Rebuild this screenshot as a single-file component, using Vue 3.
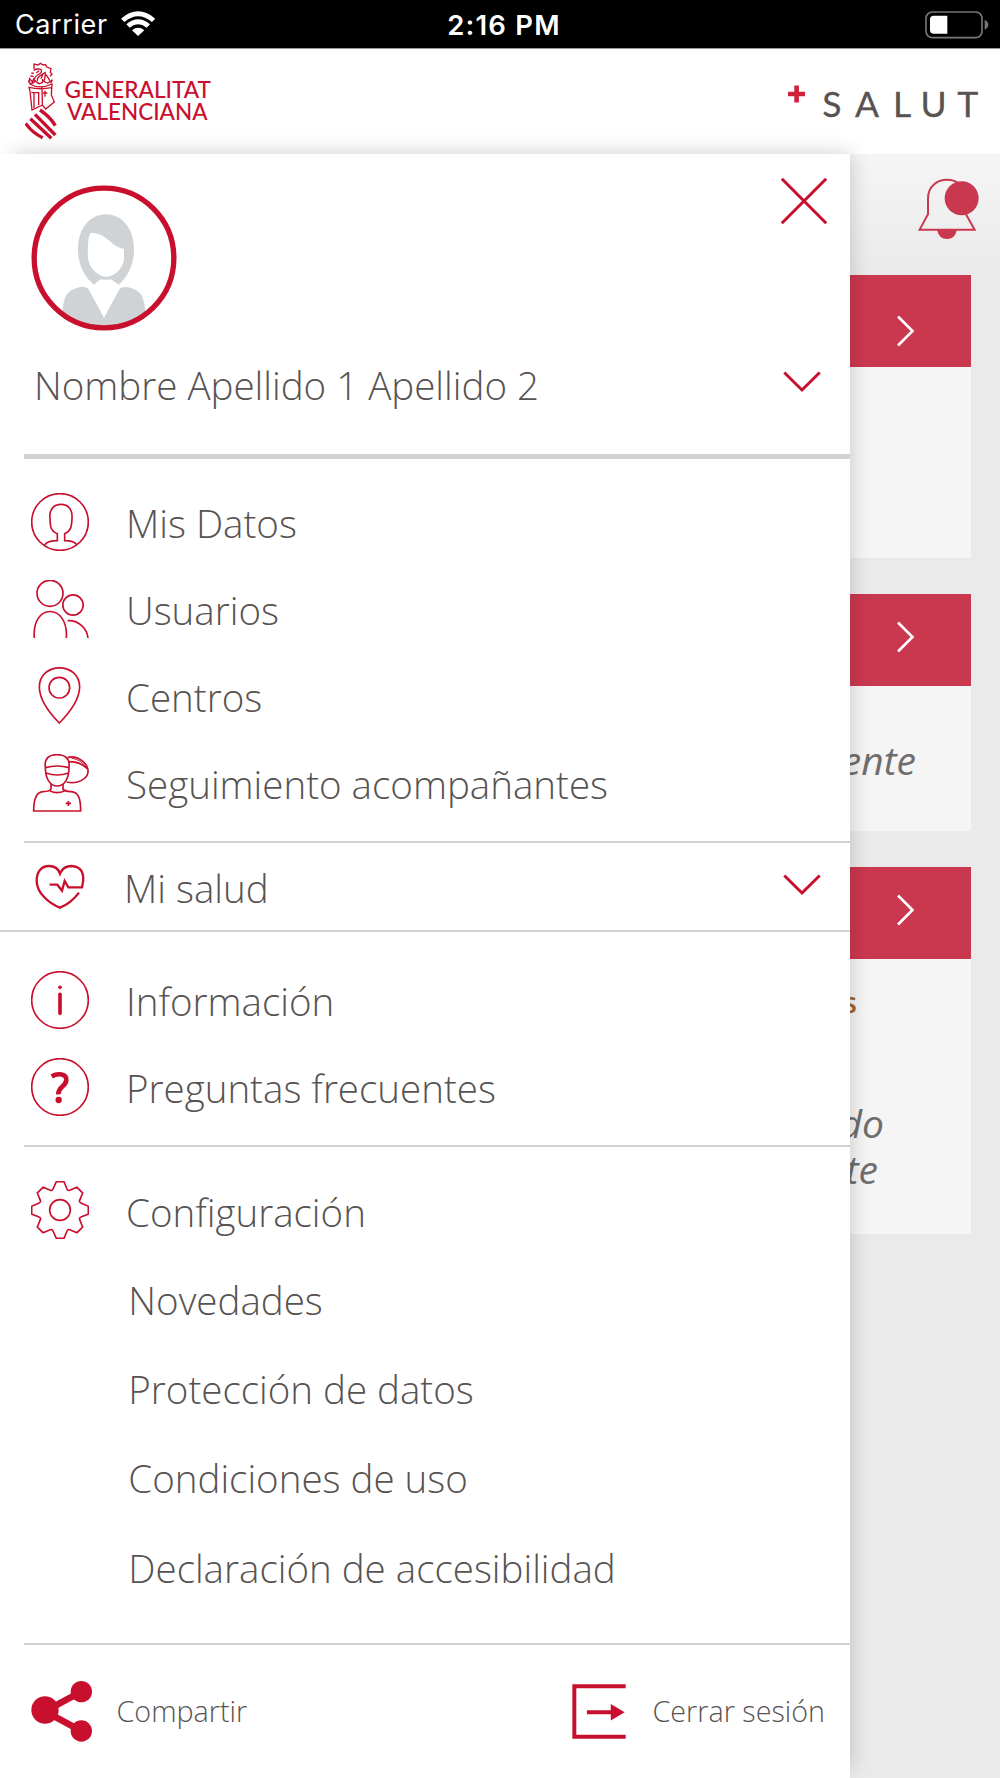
<script setup>
const mainItems = [
  { icon: 'user', label: 'Mis Datos' },
  { icon: 'users', label: 'Usuarios' },
  { icon: 'pin', label: 'Centros' },
  { icon: 'nurse', label: 'Seguimiento acompañantes' },
]
const settings = ['Novedades', 'Protección de datos', 'Condiciones de uso', 'Declaración de accesibilidad']
const cards = [
  { key: 'first', lines: [] },
  { key: 'second', lines: [{ kind: 'note', text: 'ente' }] },
  {
    key: 'third',
    lines: [
      { kind: 'tag', text: 's' },
      { kind: 'note do', text: 'do' },
      { kind: 'note te', text: 'te' },
    ],
  },
]
</script>

<template>
  <div class="screen">
    <div class="status">
      <div class="carrier">
        <span>Carrier</span>
        <svg class="wifi" viewBox="362 35 104 76">
          <path d="M362 58Q413 14 465 58L455 68Q413 34 372 68Z" />
          <path d="M378 75Q413 45 449 75L439 85Q413 65 388 85Z" />
          <path d="M395 93Q413 78 432 93L413 110Z" />
        </svg>
      </div>
      <span class="time">2:16 PM</span>
      <svg class="battery" viewBox="674 31 192 84">
        <rect x="677" y="34" width="168" height="77" rx="19" fill="none" stroke="#777" stroke-width="5" />
        <path d="M700 45H741V99H700Q689 99 689 88V56Q689 45 700 45Z" fill="#fff" />
        <path d="M853 57Q864 63 864 72Q864 81 853 87Z" fill="#777" />
      </svg>
    </div>

    <header class="brand">
      <svg class="gva" width="190" height="80" viewBox="0 0 190 80">
        <g transform="translate(-25 -62) scale(.33333)" fill="none" stroke="#c8102e" stroke-width="4">
          <path d="M102 207V192L114 195L121 190L130 195L137 194L140 201L153 206L151 217L156 223L150 229" />
          <path d="M87 249L89 236L97 246L102 234M87 240Q84 250 94 250Q105 249 103 239Q112 253 121 250Q131 249 127 238Q139 252 145 248L157 239L152 250" />
          <path d="M101 211Q112 205 123 208Q128 216 118 222Q104 229 103 238M94 219L102 220M91 228L101 229M109 219L117 212M112 244Q111 232 122 226L137 216M123 236L130 220M133 242L136 222L146 236L149 242" />
          <path d="M89 252Q119 269 156 252L154 285L163 306L137 327L127 315L96 330L90 274L87 262Q120 270 154 263M94 278H116V315M102 279V324M126 258L127 315" />
          <path d="M135 272V290M129 279H142" />
          <path d="M120 330Q150 350 166 377M105 343L166 405M91 356L154 415M77 370Q96 398 128 413" stroke-width="10" />
        </g>
        <text x="39.5" y="35.700" textLength="146.5" lengthAdjust="spacingAndGlyphs">GENERALITAT</text>
        <text x="42" y="58.200" textLength="140.5" lengthAdjust="spacingAndGlyphs">VALENCIANA</text>
      </svg>
      <svg class="salut" width="212" height="40" viewBox="0 0 212 40">
        <path d="M0 9H17M8.600 0.500V17.500" stroke="#d0213d" stroke-width="4.600" />
        <text x="34.300 67 105 132.500 169.300" y="32">SALUT</text>
      </svg>
    </header>

    <main class="content">
      <div class="bell-row">
        <svg class="bell" viewBox="650 530 190 190">
          <path d="M658 688L683 642V594C683 520 797 520 797 594V642L823 688Z" fill="none" stroke="#ca3850" stroke-width="6" />
          <path d="M710 688H770Q764 716 740 716Q716 716 710 688Z" fill="#ca3850" />
          <circle cx="784" cy="594" r="51" fill="#ca3850" />
        </svg>
      </div>
      <article v-for="card in cards" :key="card.key" class="card" :class="card.key">
        <div class="card-head">
          <svg width="18" height="32" viewBox="0 0 18 32"><path d="M1 1.500L15.500 16L1 30.500" fill="none" stroke="#fff" stroke-width="2.600" /></svg>
        </div>
        <div class="card-body">
          <p v-for="line in card.lines" :key="line.text" :class="line.kind">{{ line.text }}</p>
        </div>
      </article>
    </main>

    <aside class="drawer">
      <div class="panel">
        <section class="profile">
          <div class="profile-top">
            <svg class="avatar" viewBox="93 77 437 437">
              <defs>
                <clipPath id="face"><circle cx="312" cy="296" r="206" /></clipPath>
              </defs>
              <g clip-path="url(#face)">
                <path fill="#d0d3d6" fill-rule="evenodd" d="M282 376C252 352 234 315 234 270C234 207 270 165 318 165C366 165 402 207 402 270C402 315 384 352 356 376Q342 366 333 360Q318 363 303 360Q293 365 282 376ZM272 221C263 226 263 280 264 297C267 326 294 352 318 352C345 352 372 326 372 294V268C336 266 319 218 272 221Z" />
                <path fill="#d0d3d6" d="M188 452C193 400 208 394 232 385Q258 378 266 390L312 475L358 390Q367 379 391 385C417 395 431 400 436 455V520H188Z" />
              </g>
              <circle cx="312" cy="296" r="209.500" fill="none" stroke="#c8102e" stroke-width="16" />
            </svg>
            <svg class="close" width="48" height="48" viewBox="0 0 48 48"><path d="M1.800 1.800L46.200 46.200M46.200 1.800L1.800 46.200" fill="none" stroke="#c8102e" stroke-width="3" /></svg>
          </div>
          <div class="profile-name">
            <span>Nombre Apellido 1 Apellido 2</span>
            <svg class="chevron" width="38" height="22" viewBox="0 0 38 22"><path d="M1.300 1.500L19 19L36.700 1.500" /></svg>
          </div>
        </section>

        <div class="rule thick"></div>

        <nav class="group main">
          <div v-for="item in mainItems" :key="item.label" class="item">
            <svg v-if="item.icon === 'user'" class="icon" viewBox="94 69 174 174">
              <circle cx="181" cy="156" r="85" />
              <path d="M135 225Q142 212 173 212V191C152 183 152 170 151 145C148 116 164 103 184 103C204 103 219 116 217 145C216 170 214 183 195 191V212Q224 212 232 225" />
            </svg>
            <svg v-else-if="item.icon === 'users'" class="icon" viewBox="94 330 174 174">
              <circle cx="151" cy="370" r="39" />
              <circle cx="220" cy="405" r="30.500" />
              <path d="M104 504C95 398 207 398 200 504M204 452C238 450 262 476 265 504" />
            </svg>
            <svg v-else-if="item.icon === 'pin'" class="icon" viewBox="94 591 174 174">
              <path d="M179 759Q120 700 119 652C119 574 240 574 240 652Q238 700 179 759Z" />
              <circle cx="179" cy="653" r="31" />
            </svg>
            <svg v-else class="icon" viewBox="94 852 174 174">
              <path d="M137 892C133 862 152 854 172 854C192 854 212 862 208 892C208 926 195 948 172 948C151 948 137 926 137 892ZM137 893Q172 883 208 893M139 909Q172 921 207 909" />
              <path d="M204 862C235 854 267 882 265 906C264 927 232 944 201 936M208 875Q243 875 263 896" />
              <path d="M215 864Q248 870 262 896" stroke-width="3" />
              <path d="M154 942V957Q151 964 130 965C111 966 102 982 102 1023H243C243 982 235 967 214 965Q194 964 190 957V942M151 963Q172 973 194 963M206 993V1008M198 1000H214" />
            </svg>
            <span>{{ item.label }}</span>
          </div>
        </nav>

        <div class="rule"></div>

        <div class="item health">
          <svg class="icon bold" viewBox="94 113 174 174">
            <path d="M150 193H173L187 211L195 182L206 201H247C258 158 244 138 215 137C195 137 186 148 181 160C177 148 167 137 148 137C125 137 111 154 111 181C111 218 149 250 181 262Q214 249 238 217" />
          </svg>
          <span>Mi salud</span>
          <svg class="chevron" width="38" height="22" viewBox="0 0 38 22"><path d="M1.300 1.500L19 19L36.700 1.500" /></svg>
        </div>

        <div class="rule full"></div>

        <nav class="group info">
          <div class="item">
            <svg class="icon" viewBox="94 453 174 174">
              <circle cx="181" cy="540" r="85" />
              <path d="M181 523V580" stroke-width="11" stroke-linecap="round" />
              <circle cx="181" cy="502" r="5.500" class="solid" />
            </svg>
            <span>Información</span>
          </div>
          <div class="item">
            <svg class="icon" viewBox="94 714 174 174">
              <circle cx="181" cy="801" r="85" />
              <path d="M156 769C176 758 201 762 200 780C199 801 175 799 176 823" stroke-width="14" />
              <circle cx="177" cy="840" r="9.500" class="solid" />
            </svg>
            <span>Preguntas frecuentes</span>
          </div>
        </nav>

        <div class="rule"></div>

        <nav class="group config">
          <div class="item">
            <svg class="icon" viewBox="94 94 174 174">
              <path d="M170 96H193L202 118Q204 124 210 122L232 113L249 130L240 152Q238 158 244 160L266 170V193L244 202Q238 204 240 210L249 232L232 249L210 240Q204 238 202 244L193 266H170L160 244Q158 238 152 240L130 249L113 232L122 210Q124 204 118 202L96 193V170L118 160Q124 158 122 152L113 130L130 113L152 122Q158 124 160 118Z" />
              <circle cx="181" cy="181" r="31" />
            </svg>
            <span>Configuración</span>
          </div>
          <div v-for="label in settings" :key="label" class="item sub">
            <span>{{ label }}</span>
          </div>
        </nav>

        <div class="rule"></div>

        <footer class="actions">
          <div class="action">
            <svg width="61" height="61" viewBox="93 483 183 183">
              <path d="M244 515L135 574L244 633" fill="none" stroke="#c8102e" stroke-width="20" />
              <g fill="#c8102e">
                <circle cx="135" cy="570" r="41" />
                <circle cx="244" cy="515" r="32" />
                <circle cx="244" cy="633" r="32" />
              </g>
            </svg>
            <span>Compartir</span>
          </div>
          <div class="action exit">
            <svg width="54" height="55" viewBox="63 194 163 166">
              <path d="M225 201H70V353H225M108 279H182" fill="none" stroke="#c8102e" stroke-width="12" />
              <path d="M180 254L222 279L180 304Z" fill="#c8102e" />
            </svg>
            <span>Cerrar sesión</span>
          </div>
        </footer>
      </div>
    </aside>
  </div>
</template>

<style>
body {
  background: #eaeaea;
}
</style>

<style scoped>
.screen {
  position: relative;
  width: 1000px;
  height: 1778px;
  overflow: hidden;
  display: flex;
  flex-direction: column;
  font-family: "Open Sans", sans-serif;
  background: #eaeaea;
}
.status {
  box-sizing: border-box;
  height: 49px;
  display: grid;
  grid-template-columns: 1fr auto 1fr;
  align-items: center;
  padding: 2px 11px 0 15px;
  background: #000;
  border-bottom: 1px solid #999;
  color: #fff;
  font-family: Inter, sans-serif;
  font-size: 27px;
  line-height: 46px;
}
.carrier {
  display: flex;
  align-items: center;
  gap: 13px;
  letter-spacing: .6px;
}
.wifi {
  width: 34.700px;
  height: 25.300px;
  margin-top: -2px;
  fill: #fff;
}
.time {
  padding-left: 4px;
  font-size: 27.500px;
  font-weight: 600;
  letter-spacing: 1.200px;
}
.battery {
  width: 64px;
  height: 28px;
  margin-top: -1px;
  justify-self: end;
}
.brand {
  box-sizing: border-box;
  height: 105px;
  display: flex;
  justify-content: space-between;
  align-items: flex-start;
  padding: 13px 0 0 25px;
  background: #fff;
}
.gva text {
  font: 500 22.500px Lato, sans-serif;
  fill: #c8102e;
}
.salut {
  margin: 23px 0 0;
}
.salut text {
  font: 400 35.500px Lato, sans-serif;
  fill: #575352;
  stroke: #575352;
  stroke-width: .3px;
}
.content {
  flex: 1;
  padding: 0 29px;
  background: linear-gradient(#f5f5f5, #eaeaea 121px);
}
.bell-row {
  height: 121.400px;
  display: flex;
  justify-content: flex-end;
}
.bell {
  width: 63.300px;
  height: 63.300px;
  margin: 22.500px -9px 0 0;
}
.card {
  margin-bottom: 36px;
  background: #f5f5f5;
}
.card-head {
  box-sizing: border-box;
  height: 92px;
  display: flex;
  justify-content: flex-end;
  align-items: center;
  padding: 0 56px 6px 0;
  background: #ca3850;
}
.first .card-head {
  padding: 20px 56px 0 0;
}
.card-body {
  display: flow-root;
  text-align: right;
}
.first .card-body { height: 191px; }
.second .card-body { height: 145px; }
.third .card-body { height: 275px; }
.card-body p {
  margin: 0;
}
.note {
  font-size: 39px;
  line-height: 46px;
  font-style: italic;
  color: #6f6d6e;
}
.second .note {
  padding: 51px 55px 0 0;
}
.tag {
  font-size: 28px;
  line-height: 40px;
  font-weight: 600;
  color: #9c6430;
  padding: 23px 114px 0 0;
}
.third .do {
  padding: 78px 87px 0 0;
}
.third .te {
  padding-right: 93px;
}
.drawer {
  position: absolute;
  top: 154px;
  left: 0;
  width: 850px;
  height: 1624px;
}
.drawer::before {
  content: "";
  position: absolute;
  inset: 0 0 10px 14px;
  box-shadow: 0 0 20px rgba(20, 0, 5, .2);
}
.panel {
  position: relative;
  height: 100%;
  background: #fff;
  color: #575352;
  font-size: 38.500px;
  font-weight: 300;
}
.profile {
  box-sizing: border-box;
  height: 300px;
  padding: 24px 22px 0 31px;
}
.profile-top {
  display: flex;
  justify-content: space-between;
  align-items: flex-start;
}
.avatar {
  width: 145.700px;
  height: 145.700px;
  margin-top: 7.300px;
}
.close {
  margin-top: -1.500px;
}
.profile-name {
  display: flex;
  justify-content: space-between;
  align-items: center;
  padding: 27px 13px 0 3px;
  line-height: 54px;
}
.profile-name span {
  margin: .500px 0 -.500px;
}
.profile-name .chevron {
  margin: -5px -6px 0 0;
}
.chevron {
  fill: none;
  stroke: #c8102e;
  stroke-width: 3;
}
.rule {
  height: 2px;
  margin-left: 24px;
  background: #d0d3d6;
}
.rule.thick {
  height: 5px;
}
.rule.full {
  margin-left: 0;
}
.item {
  display: flex;
  align-items: center;
  height: 87px;
  padding-left: 31px;
  line-height: 87px;
}
.item span {
  position: relative;
  top: 2px;
}
.icon {
  width: 58px;
  height: 58px;
  margin-right: 37px;
  fill: none;
  stroke: #c8102e;
  stroke-width: 5;
}
.icon.bold {
  stroke-width: 7;
}
.icon .solid {
  fill: #c8102e;
  stroke: none;
}
.main {
  padding: 19px 0 15px;
}
.health .icon {
  margin-right: 35px;
}
.health .chevron {
  margin: -3px 29px 0 auto;
}
.info {
  padding: 24px 0 15px;
}
.config {
  padding: 19.500px 0 32.200px;
}
.item.sub {
  height: 89.330px;
  padding-left: 128.300px;
  line-height: 89px;
}
.actions {
  display: flex;
  justify-content: space-between;
  align-items: center;
  height: 133px;
  padding: 0 25px 0 31px;
  font-size: 28.700px;
}
.action {
  display: flex;
  align-items: center;
  gap: 24.500px;
}
.action span {
  position: relative;
  top: -1px;
}
.exit {
  gap: 27px;
}
</style>
